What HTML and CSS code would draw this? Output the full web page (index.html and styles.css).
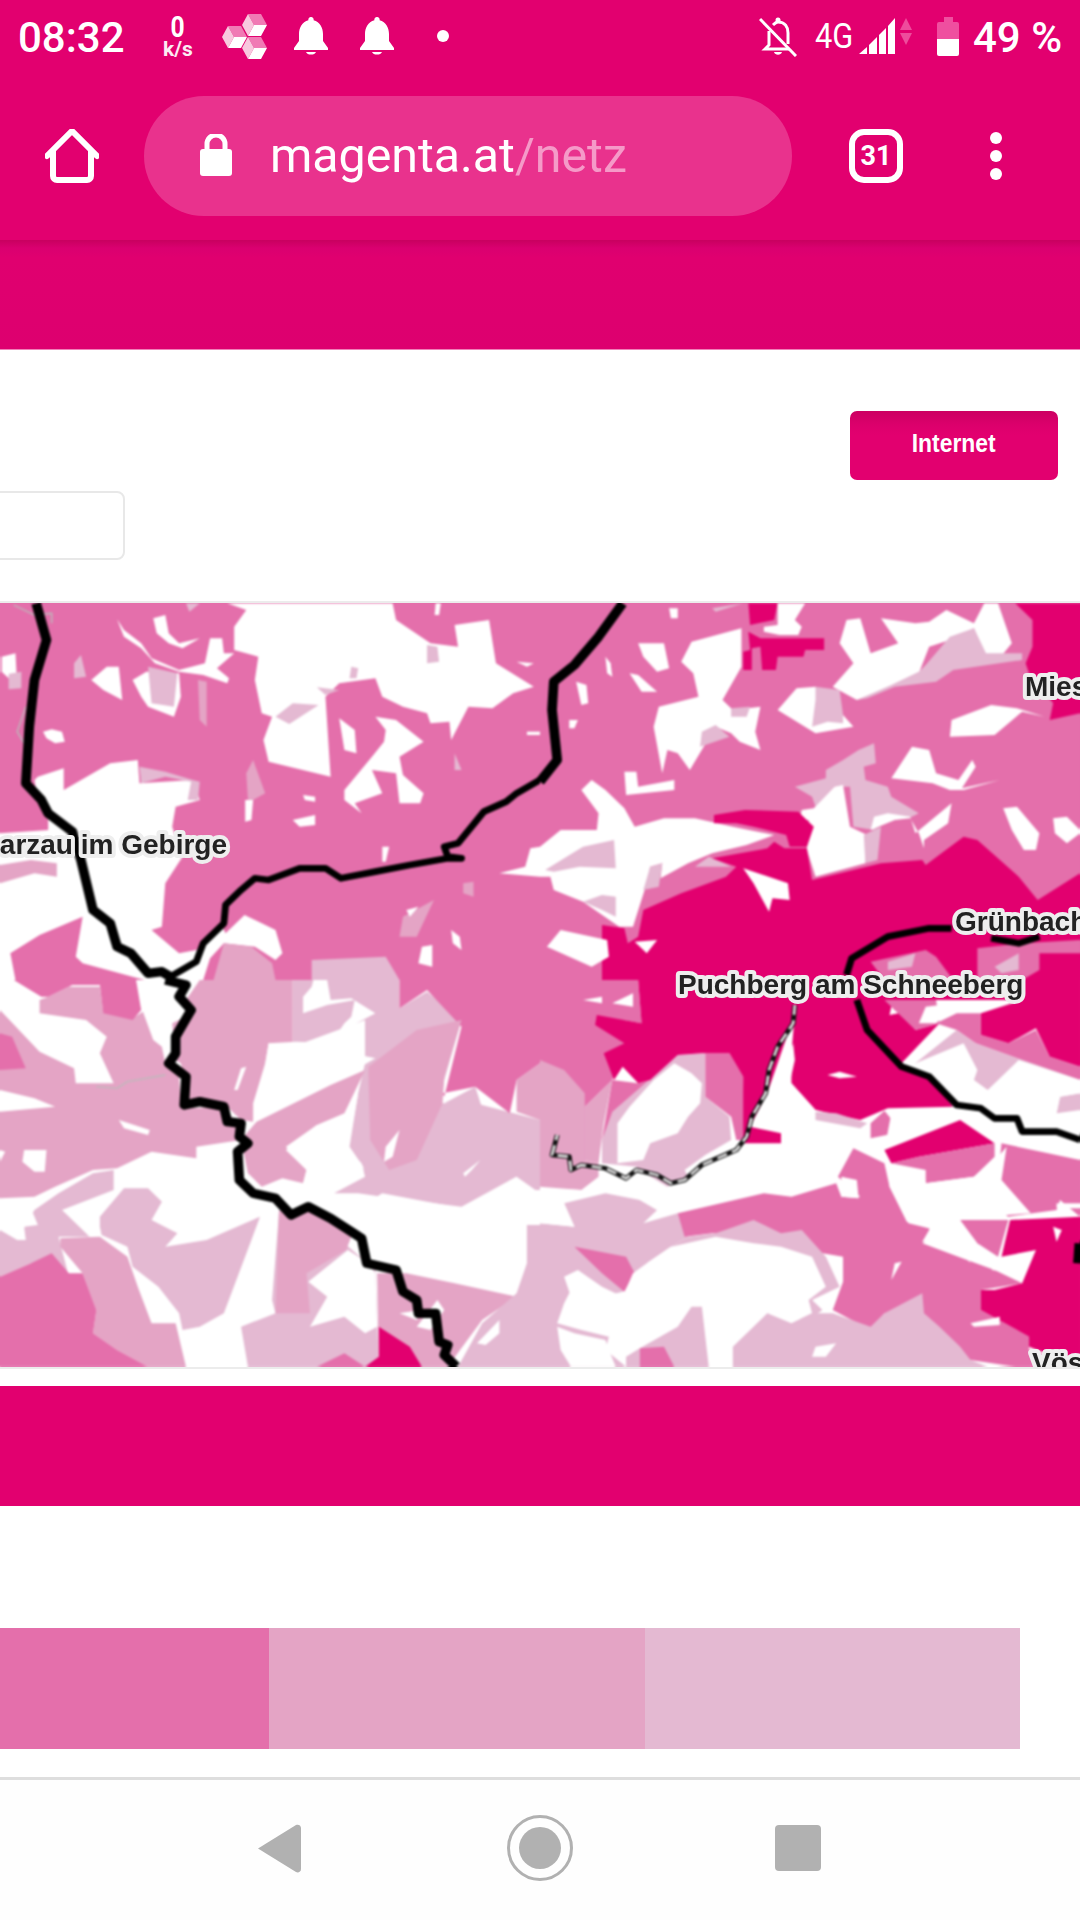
FILE: index.html
```html
<!DOCTYPE html>
<html lang="de">
<head>
<meta charset="utf-8">
<title>magenta.at/netz</title>
<link rel="stylesheet" href="styles.css">
</head>
<body>
<div class="page">
  <div class="status">
    <span class="time">08:32</span>
    <div class="speed"><span class="speed-n">0</span><span class="speed-u">k/s</span></div>
    <svg class="cubes" viewBox="0 0 45 45">
      <g id="cube-a" transform="translate(20 0)"><polygon class="cube-t" points="6,0 19,0 25,11 12,11"/><polygon class="cube-l" points="0,11 6,0 12,11 6,22"/><polygon class="cube-w" points="12,11 25,11 19,22 6,22"/></g>
      <g transform="translate(0 12)"><polygon class="cube-t" points="6,0 19,0 25,11 12,11"/><polygon class="cube-l" points="0,11 6,0 12,11 6,22"/><polygon class="cube-w" points="12,11 25,11 19,22 6,22"/></g>
      <g transform="translate(20 23)"><polygon class="cube-t" points="6,0 19,0 25,11 12,11"/><polygon class="cube-l" points="0,11 6,0 12,11 6,22"/><polygon class="cube-w" points="12,11 25,11 19,22 6,22"/></g>
    </svg>
    <svg class="bell" viewBox="0 0 34 38"><path class="ico-w" d="M17 0a2.6 2.6 0 0 1 2.6 3.2C26 5 29 11 29 17v7l5 7v2H0v-2l5-7v-7C5 11 8 5 14.4 3.2A2.6 2.6 0 0 1 17 0ZM12 35h10c-1 3.4-9 3.4-10 0Z"/></svg>
    <svg class="bell bell-b" viewBox="0 0 34 38"><path class="ico-w" d="M17 0a2.6 2.6 0 0 1 2.6 3.2C26 5 29 11 29 17v7l5 7v2H0v-2l5-7v-7C5 11 8 5 14.4 3.2A2.6 2.6 0 0 1 17 0ZM12 35h10c-1 3.4-9 3.4-10 0Z"/></svg>
    <span class="dot"></span>
    <svg class="mute" viewBox="0 0 38 40">
      <path class="ico-s" d="M10 14v14l-4 4h24M14 8c2-2 3-3 5-3 7 0 10 5 10 11v11"/>
      <circle class="ico-w" cx="19" cy="3" r="2.5"/>
      <path class="ico-w" d="M15 35h8c-1 3.500-7 3.500-8 0Z"/>
      <path class="ico-s" d="M1 2l36 37"/>
    </svg>
    <span class="net">4G</span>
    <svg class="signal" viewBox="0 0 36 36">
      <polygon class="ico-w" points="0,36 8,29 8,36"/><polygon class="ico-w" points="10,36 10,27 18,19 18,36"/><polygon class="ico-w" points="20,36 20,17 27,10 27,36"/><polygon class="ico-w" points="29,36 29,8 36,0 36,36"/>
    </svg>
    <svg class="arrows" viewBox="0 0 12 28"><polygon class="arrow" points="6,0 12,12 0,12"/><polygon class="arrow" points="0,15 12,15 6,27"/></svg>
    <svg class="batt" viewBox="0 0 22 39"><path class="batt-top" d="M7 0h9v5h4a2 2 0 0 1 2 2v15H0V7a2 2 0 0 1 2-2h5Z"/><path class="ico-w" d="M0 22h22v15a2 2 0 0 1-2 2H2a2 2 0 0 1-2-2Z"/></svg>
    <span class="pct">49 %</span>
  </div>

  <div class="toolbar">
    <svg class="home" viewBox="0 0 54 54"><path class="home-s" d="M2 27 27 2l25 25M8 22v25a4 4 0 0 0 4 4h30a4 4 0 0 0 4-4V22"/></svg>
    <div class="pill">
      <svg class="lock" viewBox="0 0 32 42"><path class="ico-w" d="M3 15h26a3 3 0 0 1 3 3v21a3 3 0 0 1-3 3H3a3 3 0 0 1-3-3V18a3 3 0 0 1 3-3Z"/><path class="lock-s" d="M7 16v-6a9 9 0 0 1 18 0v6"/></svg>
      <span class="url">magenta.at<span class="url-path">/netz</span></span>
    </div>
    <div class="tabs">31</div>
    <div class="menu"><i></i><i></i><i></i></div>
  </div>

  <div class="band"></div>

  <div class="controls">
    <div class="btn-row"><div class="btn"><span>Internet</span></div></div>
    <div class="input"></div>
  </div>

  <div class="map">
    <svg class="map-svg" viewBox="0 603 1080 764">
      <g class="map-art">
        <use href="#art" x="-3"/>
        <use href="#art" x="3"/>
        <use href="#art" y="-3"/>
        <use href="#art" y="3"/>
        <g id="art">
        <!-- top left -->
        <g transform="translate(0 600) scale(.3444 .3333)">
          <rect class="c2" x="0" y="0" width="1568" height="1140"/>
          <polygon class="w" points="660,10 715,30 680,80 680,150 750,170 740,240 760,340 790,350 765,420 780,485 960,530 945,290 985,250 1090,235 1110,290 1170,320 1240,340 1250,370 1305,365 1310,420 1360,320 1430,325 1490,280 1550,260 1440,190 1420,60 1320,75 1330,140 1250,130 1150,60 1140,10"/>
          <polygon class="w" points="5,170 45,160 48,220 30,222 25,235 5,215"/>
          <polygon class="c4" points="25,222 62,215 62,265 25,268"/>
          <polygon class="w" points="125,395 150,388 180,395 188,425 160,430 135,415"/>
          <polygon class="w" points="445,55 480,45 490,100 520,130 580,115 530,145 490,130 455,100"/>
          <polygon class="w" points="340,58 360,90 410,130 440,175 520,210 595,190 610,115 645,115 650,160 680,160 630,205 665,235 660,250 590,225 520,215 450,190 410,145 360,110"/>
          <polygon class="w" points="265,240 310,200 345,200 355,300 300,270"/>
          <polygon class="c4" points="215,190 235,165 250,230 215,235"/>
          <polygon class="w" points="385,240 425,215 520,220 525,290 505,350 430,320 410,290"/>
          <polygon class="c4" points="430,200 515,220 505,320 440,310"/>
          <polygon class="c3" points="575,240 600,245 600,380 580,360"/>
          <polygon class="w" points="110,530 185,505 185,570 320,490 400,480 405,550 560,540 580,600 510,620 500,680 530,770 480,850 470,980 440,990 520,1060 570,1050 590,1140 420,1140 240,1090 220,1070 240,950 115,1005 30,1060 45,1140 0,1140 0,700 140,690 140,660 110,600 100,540"/>
          <polygon class="c3" points="0,795 90,780 165,790 165,830 100,820 0,850"/>
          <polygon class="c4" points="405,500 480,515 560,540 580,545 575,600 545,600 555,545 480,530 410,550"/>
          <polygon class="c3" points="715,520 735,480 770,580 735,600 720,600"/>
          <polygon class="w" points="712,600 735,600 730,660 712,665"/>
          <polygon class="w" points="850,660 915,645 915,675 870,680"/>
          <polygon class="w" points="880,585 915,590 915,605 885,600"/>
          <polygon class="c4" points="800,350 850,310 925,315 840,372"/>
          <polygon class="w" points="985,355 1030,390 1035,460 1000,450"/>
          <polygon class="w" points="1090,350 1150,360 1230,425 1160,470 1170,525 1230,580 1220,610 1160,610 1150,520 1080,510 1110,580 1030,610 1050,640 1000,600 1000,570 1080,470 1115,425 1120,390"/>
          <polygon class="w" points="1110,740 1130,740 1120,785 1110,785"/>
          <polygon class="c4" points="1320,460 1340,510 1320,510"/>
          <polygon class="w" points="1540,745 1568,740 1568,830 1450,820 1525,800"/>
          <polygon class="c3" points="1170,950 1260,900 1210,1010 1160,1010"/>
          <polygon class="w" points="1180,930 1215,920 1190,950"/>
          <polygon class="w" points="1310,990 1335,1010 1340,1050 1315,1030"/>
          <polygon class="w" points="1225,1040 1255,1035 1255,1100 1215,1090"/>
          <polygon class="c4" points="1240,135 1270,140 1275,185 1240,190"/>
          <polygon class="c4" points="1020,200 1040,205 1035,235 1015,235"/>
          <polygon class="c4" points="920,262 985,270 945,285"/>
          <polygon class="w" points="1265,10 1280,10 1275,45 1262,45"/>
          <polygon class="w" points="1500,185 1550,190 1530,200"/>
          <polygon class="w" points="1530,395 1568,395 1568,405 1530,405"/>
          <polygon class="c3" points="1345,850 1375,845 1375,890 1345,880"/>
          <polygon class="c4" points="540,10 580,10 550,35"/>
          <polygon class="w" points="710,945 760,970 800,990 820,1060 800,1080 740,1040 650,1030 610,1075 590,1140 560,1140 570,1050 640,970 655,1000"/>
          <polygon class="c3" points="620,1140 650,1030 730,1040 790,1090 800,1140"/>
          <polygon class="c4" points="905,1080 1120,1070 1160,1140 905,1140"/>
          <polyline class="thin" points="40,15 100,45 150,40 150,70"/>
          <polyline class="thin" points="75,320 50,395 70,430"/>
          <polyline class="road" points="105,10 135,120 100,240 85,380 75,550 120,600 140,640 210,695 235,780 270,930 320,970 340,1040 380,1060 430,1120 470,1115 495,1130"/>
          <polyline class="road-n" points="1568,540 1500,580 1470,605 1405,635 1330,730 1290,740 1300,770 1340,775 1300,775 1190,795 1090,815 990,835 945,805 870,805 780,840 740,835 700,870 655,915 650,970 590,1030 570,1085 495,1130 490,1140"/>
        </g>
        <!-- top right -->
        <g transform="translate(540 600) scale(.3444 .3333)">
          <rect class="c2" x="0" y="0" width="1568" height="1140"/>
          <polygon class="c1" points="605,10 690,10 680,60 610,75"/>
          <polygon class="c1" points="1380,10 1568,10 1568,340 1480,360 1490,310 1420,220 1410,190 1430,140 1430,60"/>
          <polygon class="c1" points="605,95 640,115 825,115 825,150 770,150 765,170 690,170 685,210 645,210 640,140 615,145 615,210 590,210 590,155 610,150"/>
          <polygon class="w" points="690,75 690,10 770,10 740,60 760,80 750,105 695,105 650,95 650,80"/>
          <polygon class="w" points="890,60 930,55 960,160 1040,130 990,55 1090,70 1130,65 1180,30 1260,70 1290,10 1330,10 1370,130 1330,180 1290,160 1260,85 1190,120 1130,140 1100,220 1020,260 920,300 850,260 910,190 870,130"/>
          <polygon class="c4" points="1120,195 1190,110 1260,85 1295,160 1400,160 1400,180 1200,210 1150,245 1030,260 950,295 920,300 1020,255 1100,215"/>
          <polygon class="w" points="1195,360 1310,315 1385,325 1465,350 1400,335 1320,405 1190,410"/>
          <polygon class="w" points="440,125 585,85 585,200 530,300 560,330 640,320 625,395 640,450 580,425 555,400 510,380 435,510 400,460 370,450 355,520 330,380 345,320 460,290 445,220 410,185"/>
          <polygon class="c4" points="470,395 510,375 550,410 465,440"/>
          <polygon class="c4" points="555,325 610,320 600,350 555,350"/>
          <polygon class="w" points="285,130 360,130 375,205 340,215 300,170"/>
          <polygon class="w" points="260,220 285,225 340,275 295,275"/>
          <polygon class="w" points="190,170 205,190 210,230 195,220"/>
          <polygon class="w" points="105,245 135,255 140,310 120,315"/>
          <polygon class="w" points="85,360 110,360 100,385 85,385"/>
          <polygon class="w" points="375,25 400,25 400,55 380,55"/>
          <polygon class="c4" points="500,25 590,10 510,35"/>
          <polygon class="w" points="245,515 280,515 285,560 390,540 390,570 250,585"/>
          <polygon class="w" points="690,330 745,265 800,260 880,345 910,380 800,400"/>
          <polygon class="c4" points="800,260 870,270 880,345 880,370 835,365 790,380 800,300"/>
          <polygon class="w" points="1020,535 1080,440 1130,450 1150,520 1215,540 1255,480 1265,500 1225,565 1335,540 1230,570 1190,570 1140,550"/>
          <polygon class="c4" points="740,560 830,535 830,510 880,480 925,450 970,430 975,490 940,500 945,540 1010,560 1020,590 1100,640 1080,650 1010,660 970,690 910,680 900,560 855,560 800,620 790,590"/>
          <polygon class="w" points="760,630 795,625 855,560 880,555 900,680 950,705 945,790 800,830 775,750 780,660 755,660"/>
          <polygon class="c4" points="940,705 990,680 980,780 945,790"/>
          <polygon class="w" points="970,650 1010,640 1075,650 1090,700 1195,610 1185,670 1115,720 1115,745 1100,700 1075,655 1030,660 960,690"/>
          <polygon class="w" points="1345,625 1385,620 1450,700 1440,750 1405,750 1370,690"/>
          <polygon class="w" points="1490,655 1530,650 1568,690 1568,700 1530,730 1495,700"/>
          <polygon class="w" points="120,570 150,540 190,570 245,625 275,680 360,655 450,655 560,680 680,705 600,735 500,760 430,790 350,835 355,790 320,800 310,850 270,980 230,980 125,905 40,870 30,830 0,830 0,740 60,690 165,690 170,640"/>
          <polygon class="c4" points="15,810 125,740 215,720 220,805 115,800 40,815"/>
          <polygon class="c4" points="125,905 180,885 220,890 220,950 180,930"/>
          <polygon class="c4" points="300,870 320,800 355,790 345,860"/>
          <polygon class="c4" points="490,770 555,800 450,800"/>
          <polygon class="c1" points="180,975 245,985 255,1030 285,1010 300,930 410,880 540,830 570,800 500,775 660,745 680,725 710,745 775,745 790,840 990,790 1110,780 1120,795 1230,710 1270,720 1390,830 1445,900 1568,820 1568,1140 180,1140"/>
          <polygon class="c1" points="505,645 595,630 750,635 795,680 775,740 725,740 715,705 620,680 570,670 505,670"/>
          <polygon class="w" points="590,805 720,850 725,900 675,895 665,935 620,850"/>
          <polygon class="w" points="20,1040 60,990 195,1020 200,1070 150,1100"/>
          <polygon class="w" points="275,1025 340,1020 310,1060"/>
          <polygon class="c2" points="960,1085 1120,1050 1150,1070 1200,1140 1000,1140"/>
          <polygon class="c4" points="1010,1085 1090,1060 1080,1100 1010,1110"/>
          <polygon class="c2" points="1270,1045 1400,1030 1568,1020 1568,1060 1450,1060 1450,1110 1400,1140 1270,1140"/>
          <polygon class="c4" points="1320,1100 1390,1060 1390,1110 1340,1120"/>
          <polyline class="road" points="240,10 170,110 100,195 40,245 35,330 50,480 0,545"/>
          <polyline class="road-n" points="890,1125 905,1075 1010,1010 1130,985 1195,985"/>
          <polyline class="road-n" points="1310,1015 1390,1030 1450,1010"/>
        </g>
        <!-- bottom left -->
        <g transform="translate(0 980) scale(.3444 .3333)">
          <rect class="w" x="0" y="0" width="1568" height="1161"/>
          <polygon class="c3" points="0,90 115,215 215,265 220,310 330,310 290,220 310,170 250,120 115,100 115,60 140,50 200,20 290,20 300,95 385,115 415,95 445,180 470,200 480,250 520,290 525,370 550,385 650,380 680,420 700,480 570,500 570,535 440,515 340,565 270,570 160,620 100,650 0,655 0,395 160,380 100,355 0,330"/>
          <polygon class="c2" points="0,160 35,170 75,265 0,270"/>
          <polygon class="c2" points="120,50 140,50 210,15 290,15 300,100 385,120 410,90 395,0 40,0"/>
          <polygon class="w" points="345,420 435,450 430,465 360,445"/>
          <polygon class="w" points="70,510 135,510 130,575 100,575 65,545"/>
          <polygon class="w" points="0,510 15,515 0,545"/>
          <polygon class="c3" points="580,0 850,0 850,205 780,190 770,250 735,370 735,425 700,420 660,380 550,360 525,250 510,240 500,130 560,100 540,60"/>
          <polygon class="w" points="700,265 715,260 690,330 680,330"/>
          <polygon class="c4" points="850,0 1160,0 1160,85 1240,35 1340,120 1290,300 1280,370 1380,370 1568,420 1568,640 1500,590 1340,680 1110,650 1040,640 970,640 1060,590 1050,550 1010,510 1040,340 1060,250 1060,120 850,200"/>
          <polygon class="w" points="780,190 860,185 960,190 1000,130 1020,110 1030,60 950,75 880,100 880,50 905,20 910,0 950,0 960,60 1020,55 1090,100 1035,130 1010,190 1020,220 1090,235 1040,265 960,285 860,320 810,370 735,425 770,255"/>
          <polygon class="c2" points="1160,0 1568,0 1568,250 1500,300 1480,400 1380,320 1285,340 1290,350 1340,140 1240,30 1160,85"/>
          <polygon class="c4" points="1290,370 1380,320 1400,385 1290,370"/>
          <polygon class="c3" points="1070,260 1210,150 1340,120 1290,290 1285,370 1210,540 1130,570 1075,480 1070,290"/>
          <polygon class="c3" points="1500,300 1568,250 1568,420 1500,395"/>
          <polygon class="w" points="1120,500 1160,450 1140,530 1115,545"/>
          <polygon class="c3" points="745,425 960,315 1060,270 1000,400 920,435 830,500 890,570 880,610 820,595 760,620 720,580 700,480"/>
          <polygon class="w" points="830,510 920,435 980,440 1040,340 1015,500 1055,560 1055,590 965,635 1030,690 1110,640 1340,685 1500,590 1525,630 1568,630 1568,730 1530,735 1530,850 1500,935 1315,900 1180,880 1095,880 1075,790 1000,740 900,670 820,600 880,610 890,570"/>
          <polygon class="w" points="1345,580 1395,540 1370,570 1350,590"/>
          <polygon class="c4" points="0,750 50,780 100,690 170,640 270,580 330,570 330,630 180,690 260,770 170,770 200,890 140,880 90,850 0,890"/>
          <polygon class="w" points="0,680 90,685 110,735 70,740 75,780 50,780 40,720 0,720"/>
          <polygon class="c4" points="290,710 360,625 430,625 470,665 440,720 515,760 480,800 600,780 755,710 730,780 650,1000 580,1040 530,1050 520,1000 460,920 385,860 370,800 295,765 290,740"/>
          <polygon class="c3" points="175,775 290,770 370,830 400,920 440,1030 510,1030 540,1160 430,1160 340,1110 270,1060 280,990 240,880 175,800"/>
          <polygon class="c2" points="0,890 90,850 150,820 200,880 240,880 280,990 270,1060 340,1110 430,1160 0,1160"/>
          <polygon class="c4" points="700,1040 800,1000 790,960 810,700 1000,790 1090,870 1100,1160 720,1160"/>
          <polygon class="c3" points="810,690 850,715 905,680 1020,770 1005,810 890,880 900,1000 800,1000"/>
          <polygon class="w" points="895,905 1010,810 1070,850 1090,880 1095,1040 1060,1060 1000,1010 900,1040 950,950"/>
          <polygon class="c3" points="1095,880 1180,880 1320,910 1500,950 1400,1020 1300,1160 1100,1160"/>
          <polygon class="c4" points="1500,940 1530,850 1530,735 1568,735 1568,1160 1330,1160 1400,1030"/>
          <polygon class="c2" points="920,1160 1000,1120 1060,1160"/>
          <polygon class="c1" points="1100,1040 1190,1100 1225,1160 1060,1160 1100,1130"/>
          <polygon class="w" points="1385,1090 1450,1020 1450,1060 1410,1095"/>
          <polygon class="w" points="1160,1000 1220,990 1210,1020"/>
          <polygon class="w" points="1210,1040 1270,960 1290,990 1250,1050"/>
          <polyline class="thin" points="280,320 340,325 370,305 480,285"/>
          <polyline class="road" points="480,0 540,15 520,50 555,90 510,170 510,220 490,250 540,290 535,375 580,365 650,380 660,425 700,430 695,470 720,490 690,515 695,600 735,640 800,655 845,705 895,680 960,715 1050,775 1065,850 1150,870 1170,935 1210,960 1215,1000 1265,1000 1275,1085 1300,1095 1290,1125 1325,1160"/>
        </g>
        <!-- bottom right -->
        <g transform="translate(540 980) scale(.3444 .3333)">
          <rect class="w" x="0" y="0" width="1568" height="1161"/>
          <polygon class="c2" points="0,0 285,0 295,130 240,120 245,190 210,300 130,380 130,540 0,620"/>
          <polygon class="w" points="125,60 180,50 180,70"/>
          <polygon class="w" points="210,70 270,40 270,80"/>
          <polygon class="c3" points="0,240 70,270 130,340 130,540 170,550 170,590 120,630 0,625"/>
          <polygon class="c3" points="130,380 210,300 185,430 170,550 130,540"/>
          <polygon class="c2" points="210,300 285,310 320,300 215,400 180,480"/>
          <polygon class="c4" points="180,480 210,395 400,225 480,220 480,350 550,410 555,480 480,525 420,570 430,590 370,620 290,570 280,560 180,550"/>
          <polygon class="c2" points="480,220 550,220 590,290 600,480 570,480 555,410 480,350"/>
          <polygon class="w" points="225,430 260,380 330,300 390,250 440,280 470,310 465,370 430,410 400,460 320,490 300,540 225,550"/>
          <polygon class="c1" points="285,0 990,0 1090,150 1160,130 1040,260 1130,290 1200,380 1010,385 930,420 800,390 730,310 730,220 740,100 710,190 660,340 610,440 700,460 700,490 590,490 590,290 550,220 470,220 400,225 320,300 285,310 240,260 215,300 185,220 245,190 160,135 165,105 295,130"/>
          <polygon class="c1" points="990,0 1568,0 1568,60 990,60"/>
          <polygon class="w" points="660,380 700,320 730,310 800,390 850,405 950,440 960,480 880,505 870,590 780,640 640,640 490,655 440,640 620,600 735,530 740,505 700,490 700,460 650,400"/>
          <polygon class="w" points="700,300 735,190 740,240 725,310"/>
          <polygon class="w" points="835,285 870,275 920,290 870,295"/>
          <polygon class="c4" points="800,395 860,400 950,430 930,445 800,420"/>
          <polygon class="w" points="950,450 1000,390 1030,470 1000,550 910,505"/>
          <polygon class="c2" points="960,475 960,430 1000,392 1030,430 1020,462"/>
          <polygon class="c2" points="1000,60 1150,60 1160,130 1090,150"/>
          <polygon class="w" points="1020,80 1040,100 1015,105"/>
          <polygon class="w" points="1100,130 1120,80 1280,60 1200,80 1150,130"/>
          <polygon class="c1" points="1280,100 1400,60 1568,60 1568,260 1480,230 1440,145 1360,190 1280,165"/>
          <polygon class="c2" points="1150,130 1210,100 1280,100 1280,165 1360,190 1440,150 1480,230 1568,260 1568,300 1400,240 1265,190 1210,150"/>
          <polygon class="c4" points="1090,250 1210,150 1265,190 1400,240 1568,300 1568,390 1500,400 1510,350 1568,340 1400,290 1300,330"/>
          <polygon class="w" points="1090,250 1230,190 1270,270 1260,300 1300,330 1390,240 1568,300 1568,340 1510,350 1500,400 1400,400 1280,370 1200,350 1130,290"/>
          <polygon class="w" points="1020,400 1200,380 1300,430 1400,470 1568,490 1568,540 1340,490 1220,420 1000,510"/>
          <polygon class="c2" points="1340,490 1568,540 1568,710 1510,660 1500,690 1360,710 1320,680 1330,600"/>
          <polygon class="c1" points="1000,510 1220,420 1320,490 1100,530 1020,550"/>
          <polygon class="c2" points="1020,550 1100,530 1320,490 1320,530 1260,590 1120,610 1120,570"/>
          <polygon class="c4" points="0,730 100,740 70,670 190,640 290,660 340,690 300,730 400,700 430,770 380,800 310,850 350,870 270,880 240,935 180,950 100,910 70,970 50,1030 120,1050 200,1070 190,1110 250,1160 0,1160"/>
          <polygon class="w" points="0,620 120,630 70,670 100,740 0,730"/>
          <polygon class="w" points="190,610 300,600 340,690 290,660"/>
          <polygon class="c2" points="100,800 250,830 275,880 245,935 180,880"/>
          <polygon class="w" points="70,890 110,870 180,920 240,950 200,1010 100,980"/>
          <polygon class="c2" points="400,700 650,640 730,650 860,610 875,650 930,650 865,590 910,505 1000,550 1015,620 1070,730 1130,745 1130,780 1110,790 1240,840 1320,870 1400,910 1280,930 1280,990 1420,1070 1420,1110 1568,1160 1380,1160 1250,1140 1140,1040 1000,1000 960,1050 850,990 880,905 880,830 710,800 700,770 500,760 420,770"/>
          <polygon class="w" points="880,590 925,655 875,650"/>
          <polygon class="c4" points="430,770 510,760 620,720 700,760 760,750 830,830 870,920 790,960 820,990 780,1020 660,1000 600,1000 520,960 440,920 400,850 380,800"/>
          <polygon class="w" points="380,800 510,770 620,790 700,800 790,830 830,920 780,960 790,1000 730,1030 660,1000 570,1080 560,1130 500,1130 470,980 440,975 290,1105 250,1130 200,1070 240,950 270,880 310,850"/>
          <polygon class="c4" points="250,1130 290,1105 400,1040 440,980 470,980 490,1160 250,1160"/>
          <polygon class="w" points="50,1040 100,1060 190,1080 200,1110 220,1160 90,1160 60,1110"/>
          <polygon class="c2" points="290,1105 360,1100 390,1160 290,1160"/>
          <polygon class="c4" points="560,1100 660,1000 730,1030 790,1000 850,1000 960,1040 1000,1000 1110,940 1115,1000 1160,1040 1220,1100 1250,1140 1300,1160 560,1160"/>
          <polygon class="w" points="800,1100 860,1090 830,1130 790,1130"/>
          <polygon class="w" points="1030,850 1050,845 1020,900"/>
          <polygon class="w" points="1015,570 1115,570 1120,610 1260,590 1330,530 1355,500 1340,600 1425,700 1220,715 1130,745 1065,725 1015,620"/>
          <polygon class="w" points="875,590 920,600 925,655 875,650"/>
          <polygon class="c2" points="1220,720 1360,720 1330,830 1270,790"/>
          <polygon class="w" points="1250,850 1200,790 1110,785 1130,750 1220,720 1220,790"/>
          <polygon class="c1" points="1340,830 1365,720 1568,710 1568,1160 1420,1100 1420,1070 1280,990 1280,930 1320,930 1400,910 1440,810"/>
          <polygon class="w" points="1310,870 1400,820 1400,880"/>
          <polygon class="w" points="1490,740 1515,750 1500,785"/>
          <polygon class="w" points="1500,670 1568,670 1568,685 1500,685"/>
          <polygon class="w" points="1250,1030 1335,1010 1335,1035 1260,1040"/>
          <polyline class="road-n" points="920,60 950,150 1050,260 1130,290 1210,375 1280,385 1320,415 1385,415 1400,455 1500,455 1568,480"/>
          <polyline class="rail" points="740,75 735,130 690,200 665,270 655,340 615,410 600,470 570,510 470,555 420,600 380,610 340,585 280,570 250,595 190,565 120,555 90,570 85,530 35,525 50,465"/>
          <polyline class="rail-d" points="740,75 735,130 690,200 665,270 655,340 615,410 600,470 570,510 470,555 420,600 380,610 340,585 280,570 250,595 190,565 120,555 90,570 85,530 35,525 50,465"/>
          <path class="road-n" d="M1562 790 1558 850"/>
        </g>
        </g>
      </g>
      <g class="labels">
        <text class="label" x="227" y="854" text-anchor="end">arzau im Gebirge</text>
        <text class="label" x="678" y="994">Puchberg am Schneeberg</text>
        <text class="label" x="955" y="931">Grünbach</text>
        <text class="label" x="1025" y="696">Mies</text>
        <text class="label" x="1032" y="1372">Vös</text>
      </g>
    </svg>
  </div>

  <div class="banner"></div>

  <div class="legend"><div class="lg lg-a"></div><div class="lg lg-b"></div><div class="lg lg-c"></div></div>

  <div class="nav">
    <svg class="nav-back" viewBox="0 0 43 49"><path class="nav-f" d="M0 24.500 38 1c2-1 5 0 5 3v41c0 3-3 4-5 3Z"/></svg>
    <svg class="nav-home" viewBox="0 0 66 66"><circle class="nav-ring" cx="33" cy="33" r="31.500"/><circle class="nav-f" cx="33" cy="33" r="21"/></svg>
    <div class="nav-square"></div>
  </div>
</div>
</body>
</html>
```
FILE: styles.css
```css
* { box-sizing: border-box; }
html, body { margin: 0; padding: 0; background: #fff; }
.page { width: 1080px; height: 1920px; overflow: hidden; display: flex; flex-direction: column; font-family: Roboto, "Liberation Sans", sans-serif; }

.status { height: 72px; background: #e2006f; color: #fff; display: flex; align-items: center; flex: none; }
.time { width: 105px; margin-left: 18px; margin-right: 1px; font-size: 42px; font-weight: 500; line-height: 1; padding-top: 3px; white-space: nowrap; }
.speed { width: 36px; margin-left: 36px; display: flex; flex-direction: column; align-items: center; font-weight: 700; color: #fff; }
.speed-n { font-size: 30px; line-height: 25px; transform: scaleX(.82); }
.speed-u { font-size: 21px; line-height: 20px; opacity: .92; }
.cubes { width: 45px; height: 45px; margin-left: 26px; }
.cube-t { fill: #f07ab4; }
.cube-l { fill: #f8c8de; }
.cube-w { fill: #fff; }
.bell { width: 34px; height: 38px; margin-left: 27px; }
.bell-b { margin-left: 32px; }
.ico-w { fill: #fff; }
.ico-s { fill: none; stroke: #fff; stroke-width: 3px; }
.dot { width: 12px; height: 12px; border-radius: 50%; background: #fff; margin-left: 43px; }
.mute { width: 38px; height: 40px; margin-left: 310px; margin-top: 2px; }
.net { width: 38px; margin-left: 18px; font-size: 35px; font-weight: 400; line-height: 1; white-space: nowrap; transform: scaleX(.88); transform-origin: left center; }
.signal { width: 36px; height: 36px; margin-left: 6px; }
.arrows { width: 12px; height: 28px; margin-left: 5px; margin-top: -8px; }
.arrow { fill: #ee4c9c; }
.batt { width: 22px; height: 39px; margin-left: 25px; }
.batt-top { fill: #ef4f9f; }
.pct { margin-left: 14px; font-size: 42px; font-weight: 500; line-height: 1; padding-top: 3px; white-space: nowrap; }

.toolbar { height: 168px; background: #e2006f; display: flex; align-items: center; flex: none; position: relative; z-index: 1; }
.home { width: 54px; height: 54px; margin-left: 45px; }
.home-s { fill: none; stroke: #fff; stroke-width: 6px; stroke-linecap: round; stroke-linejoin: round; }
.pill { width: 648px; height: 120px; margin-left: 45px; border-radius: 60px; background: #e9328d; display: flex; align-items: center; padding-left: 56px; }
.lock { width: 32px; height: 42px; margin-top: -2px; }
.lock-s { fill: none; stroke: #fff; stroke-width: 5px; }
.url { margin-left: 38px; font-size: 48.300px; color: #fff; line-height: 1; white-space: nowrap; }
.url-path { color: #f59ac8; }
.tabs { width: 54px; height: 54px; margin-left: 57px; border: 6px solid #fff; border-radius: 15px; color: #fff; font-size: 27px; font-weight: 700; display: flex; align-items: center; justify-content: center; line-height: 1; }
.menu { margin-left: 87px; display: flex; flex-direction: column; gap: 6px; }
.menu i { display: block; width: 12px; height: 12px; border-radius: 50%; background: #fff; }

.band { height: 110px; flex: none; background: linear-gradient(#c8005f 0, #da0070 8px, #e0006f 18px, #dd006f 100%); border-bottom: 1px solid #f080b8; }

.controls { height: 251px; flex: none; background: #fff; padding-top: 61px; position: relative; }
.btn-row { display: flex; justify-content: flex-end; padding-right: 22px; }
.btn { width: 208px; height: 69px; border-radius: 7px; background: linear-gradient(#cc0062 0, #dc006c 14px, #e2006f 24px); color: #fff; display: flex; align-items: center; justify-content: center; font-family: "Liberation Sans", sans-serif; font-weight: 700; font-size: 26px; }
.btn span { display: block; transform: scaleX(.88); margin-top: -4px; }
.input { width: 141px; height: 69px; margin-top: 11px; margin-left: -16px; border: 2px solid #e8e8e8; border-radius: 8px; background: #fff; }

.map { height: 768px; flex: none; border-top: 2px solid #ececec; border-bottom: 2px solid #ececec; overflow: hidden; }
.map-svg { display: block; width: 1080px; height: 764px; }
.map-art { filter: blur(.8px); }
.c1 { fill: #e2006f; }
.c2 { fill: #e46fab; }
.c3 { fill: #e4a4c5; }
.c4 { fill: #e4b9d2; }
.w { fill: #fff; }
.road { fill: none; stroke: #000; stroke-width: 28px; stroke-linejoin: round; }
.road-n { fill: none; stroke: #000; stroke-width: 20px; stroke-linejoin: round; }
.rail { fill: none; stroke: #111; stroke-width: 14px; stroke-linejoin: round; }
.rail-d { fill: none; stroke: #eee; stroke-width: 7px; stroke-dasharray: 30 16; }
.thin { fill: none; stroke: #bbb; stroke-width: 4px; }
.labels { filter: blur(.6px); }
.label { font-family: "Liberation Sans", sans-serif; font-weight: 700; font-size: 28px; fill: #222; stroke: #eeeeee; stroke-width: 8px; paint-order: stroke; stroke-linejoin: round; }

.banner { height: 120px; flex: none; margin-top: 17px; background: #e2006f; }
.legend { display: flex; flex: none; height: 121px; width: 1020px; margin-top: 122px; }
.lg { height: 100%; }
.lg-a { width: 269px; background: #e46fab; }
.lg-b { width: 376px; background: #e4a4c5; }
.lg-c { width: 375px; background: #e4b9d2; }

.nav { height: 143px; flex: none; margin-top: 28px; border-top: 3px solid #dedede; background: #fefefe; display: flex; align-items: center; padding-left: 258px; padding-bottom: 4px; }
.nav-f { fill: #b1b1b1; }
.nav-ring { fill: none; stroke: #b1b1b1; stroke-width: 3px; }
.nav-back { width: 43px; height: 49px; }
.nav-home { width: 66px; height: 66px; margin-left: 206px; }
.nav-square { width: 46px; height: 46px; margin-left: 202px; background: #b1b1b1; border-radius: 4px; }
```
